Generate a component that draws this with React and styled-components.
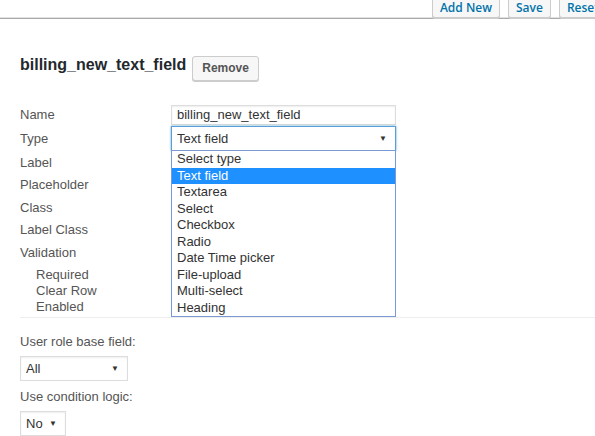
import React from 'react'
import styled, { createGlobalStyle } from 'styled-components'

const GlobalStyle = createGlobalStyle`
  html, body {
    margin: 0;
    padding: 0;
    background: #ffffff;
    overflow: hidden;
  }
  body {
    font-family: 'Liberation Sans', Arial, sans-serif;
    font-size: 13px;
    color: #555;
  }
`;

const Page = styled.div`
  width: 595px;
  height: 436px;
  overflow: hidden;
  display: flex;
  flex-direction: column;
`;

const Toolbar = styled.div`
  height: 33px;
  margin-top: -4px;
  display: flex;
  justify-content: flex-end;
  align-items: flex-start;
  gap: 8px;
  margin-right: -12px;
  border-bottom: 1px solid #aaa;
  box-shadow: inset 0 -1px 0 #e2e2e2;
`;

const TopButton = styled.button`
  height: 22px;
  padding: 0 7px;
  font-family: 'Open Sans', sans-serif;
  font-weight: 600;
  font-size: 12px;
  color: #0073aa;
  background: #f7f7f7;
  border: 1px solid #ccc;
  border-radius: 3px;
  box-shadow: 0 1px 0 #ccc;
  cursor: pointer;
`;

const Content = styled.div`
  padding: 33px 0 0 20px;
  display: flex;
  flex-direction: column;
`;

const Heading = styled.div`
  display: flex;
  align-items: center;
  gap: 6px;
  height: 28px;
`;

const Title = styled.h2`
  margin: 0;
  font-family: 'Liberation Sans', Arial, sans-serif;
  font-weight: bold;
  font-size: 16px;
  color: #23282d;
  position: relative;
  top: -1px;
`;

const RemoveButton = styled.button`
  height: 25px;
  margin-top: 4px;
  padding: 0 9px;
  font-family: 'Liberation Sans', Arial, sans-serif;
  font-weight: bold;
  font-size: 12px;
  color: #555;
  background: #f7f7f7;
  border: 1px solid #ccc;
  border-radius: 3px;
  box-shadow: 0 1px 0 #ccc;
`;

const Fields = styled.div`
  margin-top: 23px;
  display: flex;
  flex-direction: column;
`;

const Row = styled.div`
  display: flex;
  align-items: center;
  height: ${p => p.h}px;
  margin-top: ${p => p.mt || 0}px;
`;

const Label = styled.div`
  width: ${p => (p.sub ? 135 : 151)}px;
  padding-left: ${p => (p.sub ? 16 : 0)}px;
  color: #555;
  font-size: 13px;
  line-height: 15px;
`;

const Control = styled.div`
  position: relative;
  width: 225px;
`;

const TextInput = styled.div`
  box-sizing: border-box;
  height: 20px;
  border: 1px solid #ddd;
  box-shadow: inset 0 1px 2px rgba(0, 0, 0, 0.07);
  padding-left: 5px;
  display: flex;
  align-items: center;
  color: #333;
`;

const Select = styled.div`
  box-sizing: border-box;
  width: ${p => p.w || 225}px;
  height: 25px;
  border: 1px solid ${p => (p.focus ? '#5b9dd9' : '#ddd')};
  box-shadow: ${p => (p.focus ? '0 0 2px rgba(30, 140, 190, 0.8)' : 'inset 0 1px 2px rgba(0, 0, 0, 0.07)')};
  padding: 0 8px 0 5px;
  display: flex;
  align-items: center;
  justify-content: space-between;
  color: #333;
  background: #fff;
`;

const Arrow = styled.span`
  font-size: 8px;
  color: #333;
`;

const OptionList = styled.ul`
  position: absolute;
  left: 0;
  top: 24px;
  width: 225px;
  box-sizing: border-box;
  margin: 0;
  padding: 0;
  list-style: none;
  background: #fff;
  border: 1px solid #7b9ad5;
  z-index: 2;
`;

const Option = styled.li`
  height: 16.5px;
  line-height: 16.5px;
  padding-left: 5px;
  color: ${p => (p.active ? '#fff' : '#333')};
  background: ${p => (p.active ? '#1e90ff' : 'transparent')};
`;

const Divider = styled.div`
  margin-top: 3px;
  border-top: 1px solid #eee;
`;

const Section = styled.div`
  display: flex;
  flex-direction: column;
  align-items: flex-start;
`;

const SectionLabel = styled.div`
  margin: ${p => (p.first ? 16 : 8)}px 0 7px;
  color: #555;
  font-size: 13px;
`;

const types = [
  'Select type',
  'Text field',
  'Textarea',
  'Select',
  'Checkbox',
  'Radio',
  'Date Time picker',
  'File-upload',
  'Multi-select',
  'Heading',
]

const App = () => {
  return (
    <>
      <GlobalStyle />
      <Page>
        <Toolbar>
          <TopButton>Add New</TopButton>
          <TopButton>Save</TopButton>
          <TopButton>Reset</TopButton>
        </Toolbar>
        <Content>
          <Heading>
            <Title>billing_new_text_field</Title>
            <RemoveButton>Remove</RemoveButton>
          </Heading>
          <Fields>
            <Row h={23}>
              <Label>Name</Label>
              <Control>
                <TextInput>billing_new_text_field</TextInput>
              </Control>
            </Row>
            <Row h={25}>
              <Label>Type</Label>
              <Control>
                <Select focus>
                  Text field <Arrow>▼</Arrow>
                </Select>
                <OptionList>
                  {types.map((t, i) => (
                    <Option key={i} active={t === 'Text field'}>{t}</Option>
                  ))}
                </OptionList>
              </Control>
            </Row>
            <Row h={22}><Label>Label</Label></Row>
            <Row h={23}><Label>Placeholder</Label></Row>
            <Row h={22}><Label>Class</Label></Row>
            <Row h={23}><Label>Label Class</Label></Row>
            <Row h={22}><Label>Validation</Label></Row>
            <Row h={16} mt={3}><Label sub>Required</Label></Row>
            <Row h={16}><Label sub>Clear Row</Label></Row>
            <Row h={16}><Label sub>Enabled</Label></Row>
          </Fields>
          <Divider />
          <Section>
            <SectionLabel first>User role base field:</SectionLabel>
            <Select w={108}>
              All <Arrow>▼</Arrow>
            </Select>
            <SectionLabel>Use condition logic:</SectionLabel>
            <Select w={46}>
              No <Arrow>▼</Arrow>
            </Select>
          </Section>
        </Content>
      </Page>
    </>
  )
}

export default App
